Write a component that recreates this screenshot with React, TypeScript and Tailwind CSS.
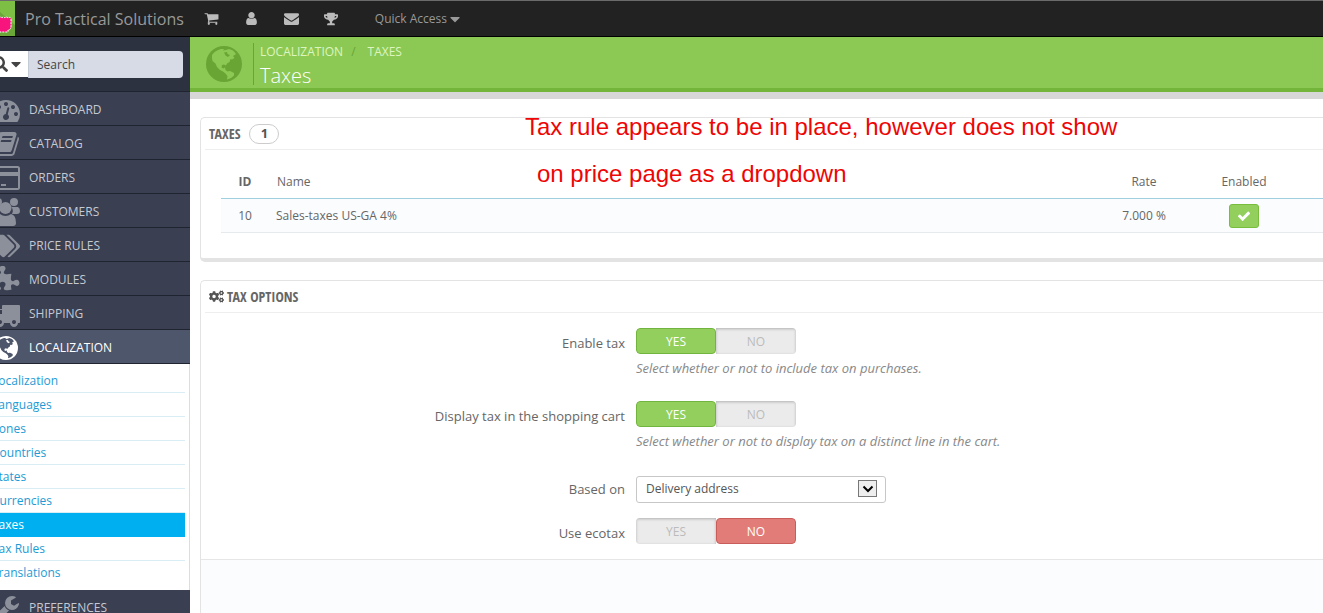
import React, { useState } from 'react';
import { FaCaretDown, FaCogs, FaSearch, FaTags, FaTrophy } from 'react-icons/fa';

interface IconProps {
  className?: string;
}

const PATHS = {
  cart: 'M704 1536q0 52-38 90t-90 38-90-38-38-90 38-90 90-38 90 38 38 90zm896 0q0 52-38 90t-90 38-90-38-38-90 38-90 90-38 90 38 38 90zm128-1088v512q0 24-16.5 42.5t-40.5 21.5l-1044 122q13 60 13 70 0 16-24 64h920q26 0 45 19t19 45-19 45-45 19h-1024q-26 0-45-19t-19-45q0-11 8-31.5t16-36 21.5-40 15.5-29.5l-177-823h-204q-26 0-45-19t-19-45 19-45 45-19h256q16 0 28.5 6.5t19.5 15.5 13 24.5 8 26 5.5 29.5 4.5 26h1201q26 0 45 19t19 45z',
  user: 'M1536 1399q0 109-62.5 187t-150.5 78h-854q-88 0-150.5-78t-62.5-187q0-85 8.5-160.5t31.5-152 58.5-131 94-89 134.5-34.5q131 128 313 128t313-128q76 0 134.5 34.5t94 89 58.5 131 31.5 152 8.5 160.5zm-256-887q0 159-112.5 271.5t-271.5 112.5-271.5-112.5-112.5-271.5 112.5-271.5 271.5-112.5 271.5 112.5 112.5 271.5z',
  envelope: 'M1792 710v794q0 66-47 113t-113 47h-1472q-66 0-113-47t-47-113v-794q44 49 101 87 362 246 497 345 57 42 92.5 65.5t94.5 48 110 24.5h2q51 0 110-24.5t94.5-48 92.5-65.5q170-123 498-345 57-39 100-87zm0-294q0 79-49 151t-122 123q-376 261-468 325-10 7-42.5 31t-54 38.5-52 32.5-57.5 27-50 9h-2q-23 0-50-9t-57.5-27-52-32.5-54-38.5-42.5-31q-91-64-262-182.5t-205-142.5q-62-42-117-115.5t-55-136.5q0-78 41.5-130t118.5-52h1472q65 0 112.5 47t47.5 113z',
  check: 'M1671 566q0 40-28 68l-724 724-136 136q-28 28-68 28t-68-28l-136-136-362-362q-28-28-28-68t28-68l136-136q28-28 68-28t68 28l294 295 656-657q28-28 68-28t68 28l136 136q28 28 28 68z',
  dashboard: 'M384 1152q0-53-37.5-90.5t-90.5-37.5-90.5 37.5-37.5 90.5 37.5 90.5 90.5 37.5 90.5-37.5 37.5-90.5zm192-448q0-53-37.5-90.5t-90.5-37.5-90.5 37.5-37.5 90.5 37.5 90.5 90.5 37.5 90.5-37.5 37.5-90.5zm428 481l101-382q6-26-7.5-48.5t-38.5-29.5-48 6.5-30 39.5l-101 382q-60 5-107 43.5t-63 98.5q-20 77 20 146t117 89 146-20 89-117q16-60-6-117t-72-91zm660-33q0-53-37.5-90.5t-90.5-37.5-90.5 37.5-37.5 90.5 37.5 90.5 90.5 37.5 90.5-37.5 37.5-90.5zm-640-640q0-53-37.5-90.5t-90.5-37.5-90.5 37.5-37.5 90.5 37.5 90.5 90.5 37.5 90.5-37.5 37.5-90.5zm448 192q0-53-37.5-90.5t-90.5-37.5-90.5 37.5-37.5 90.5 37.5 90.5 90.5 37.5 90.5-37.5 37.5-90.5zm320 448q0 261-141 483-19 29-54 29h-1402q-35 0-54-29-141-221-141-483 0-182 71-348t191-286 286-191 348-71 348 71 286 191 191 286 71 348z',
  book: 'M1703 478q40 57 18 129l-275 906q-19 64-76.5 107.5t-122.5 43.5h-923q-77 0-148.5-53.5t-99.5-131.5q-24-67-2-127 0-4 3-27t4-37q1-8-3-21.5t-3-19.5q2-11 8-21t16.5-23.5 16.5-23.5q23-38 45-91.5t30-91.5q3-10 .5-30t-.5-28q3-11 17-28t17-23q21-36 42-92t25-90q1-9-2.5-32t.5-28q4-13 22-30.5t22-22.5q19-26 42.5-84.5t27.5-96.5q1-8-3-25.5t-2-26.5q2-8 9-18t18-23 17-21q8-12 16.5-30.5t15-35 16-36 19.5-32 26.5-23.5 36-11.5 47.5 5.5l-1 3q38-9 51-9h761q74 0 114 56t18 130l-274 906q-36 119-71.5 153.5t-128.5 34.5h-869q-27 0-38 15-11 16-1 43 24 70 144 70h923q29 0 56-15.5t35-41.5l300-987q7-22 5-57 38 15 59 43zm-1064 2q-4 13 2 22.5t20 9.5h608q13 0 25.5-9.5t16.5-22.5l21-64q4-13-2-22.5t-20-9.5h-608q-13 0-25.5 9.5t-16.5 22.5zm-83 256q-4 13 2 22.5t20 9.5h608q13 0 25.5-9.5t16.5-22.5l21-64q4-13-2-22.5t-20-9.5h-608q-13 0-25.5 9.5t-16.5 22.5z',
  puzzle: 'M1755 1083q0 81-44.5 135t-123.5 54q-41 0-77.5-17.5t-59-38-56.5-38-71-17.5q-110 0-110 124 0 39 16 115t15 115v5q-22 0-33 1-34 3-97.5 11.5t-115.5 13.5-98 5q-61 0-103-26.5t-42-83.5q0-37 17.5-71t38-56.5 38-59 17.5-77.5q0-79-54-123.5t-135-44.5q-84 0-143 45.5t-59 127.5q0 43 15 83t33.5 64.5 33.5 53 15 50.5q0 45-46 89-37 35-117 35-95 0-245-24-9-2-27.5-4t-27.5-4l-13-2q-1 0-3-1-2 0-2-1v-1024q2 1 17.5 3.5t34 5 21.5 3.5q150 24 245 24 80 0 117-35 46-44 46-89 0-22-15-50.5t-33.5-53-33.5-64.5-15-83q0-82 59-127.5t144-45.5q80 0 134 44.5t54 123.5q0 41-17.5 77.5t-38 59-38 56.5-17.5 71q0 57 42 83.5t103 26.5q64 0 180-15t163-17v2q-1 2-3.5 17.5t-5 34-3.5 21.5q-24 150-24 245 0 80 35 117 44 46 89 46 22 0 50.5-15t53-33.5 64.5-33.5 83-15q82 0 127.5 59t45.5 143z',
  truck: 'M640 1408q0-52-38-90t-90-38-90 38-38 90 38 90 90 38 90-38 38-90zm-384-512h384v-256h-158q-13 0-22 9l-195 195q-9 9-9 22v30zm1280 512q0-52-38-90t-90-38-90 38-38 90 38 90 90 38 90-38 38-90zm256-1024v1024q0 15-4 26.5t-13.5 18.5-16.5 11.5-23.5 6-22.5 2-25.5 0-22.5-.5q0 106-75 181t-181 75-181-75-75-181h-384q0 106-75 181t-181 75-181-75-75-181h-64q-3 0-22.5.5t-25.5 0-22.5-2-23.5-6-16.5-11.5-13.5-18.5-4-26.5q0-26 19-45t45-19v-320q0-8-.5-35t0-38 2.5-34.5 6.5-37 14-30.5 22.5-30l198-198q19-19 50.5-32t58.5-13h160v-192q0-26 19-45t45-19h1024q26 0 45 19t19 45z',
  wrench: 'M448 1472q0-26-19-45t-45-19-45 19-19 45 19 45 45 19 45-19 19-45zm644-420l-682 682q-37 37-90 37-52 0-91-37l-106-108q-38-36-38-90 0-53 38-91l681-681q39 98 114.5 173.5t173.5 114.5zm634-435q0 39-23 106-47 134-164.5 217.5t-258.5 83.5q-185 0-316.5-131.5t-131.5-316.5 131.5-316.5 316.5-131.5q58 0 121.5 16.5t107.5 46.5q16 11 16 28t-16 28l-293 169v224l193 107q5-3 79-48.5t135.5-81 70.5-35.5q15 0 23.5 10t8.5 25z',
};

const Glyph: React.FC<IconProps & { name: keyof typeof PATHS }> = ({ name, className }) => (
  <svg viewBox="0 0 1792 1792" fill="currentColor" className={className} aria-hidden="true">
    <path d={PATHS[name]} />
  </svg>
);

const GlobeIcon: React.FC<IconProps & { landClass: string }> = ({ className, landClass }) => (
  <svg viewBox="0 0 36 36" className={className} aria-hidden="true">
    <circle cx="18" cy="18" r="18" fill="currentColor" />
    <path
      className={landClass}
      d="M6 9 C8 6 11 4 15 3 L18 3 L17 4.500 L20 4 L23 3 L27 4.500 L30 8 L27 10 L28.500 12 L26 13.500 L24.500 13 L23.500 16 L21 17.500 L20 19.500 L18 18.500 L16 19 L15.500 21.500 L17.500 22.500 L19 21.500 L19.500 24 L21.500 25.500 L24 25 L28 27 L28 29.500 L25 32 L21 33.500 L21.500 30 L19.500 27.500 L17 25.500 L14 24 L11 21 L9.500 17.500 L6.500 15 L6 12 Z"
    />
    <path d="M18 6.500 L21 6 L21.500 8 L24 9 L22 11 L19.500 9.500 Z" fill="currentColor" />
  </svg>
);

const CustomersIcon: React.FC<IconProps> = ({ className }) => (
  <svg viewBox="0 0 28 28" fill="currentColor" className={className} aria-hidden="true">
    <circle cx="6" cy="4" r="4" />
    <circle cx="22" cy="4" r="4" />
    <path d="M2 9h7q-3 3-1 7H3q-3 0-3-3 0-3 2-4z" />
    <path d="M26 9h-5q-1 0-2-.5 3 3.500 1 7.500h5q3 0 3-3 0-3-2-4z" />
    <circle cx="13.500" cy="10" r="6" />
    <path d="M8 16q2.500 2 5.500 2t5.500-2q5 1 5 9 0 3-3 3H6q-3 0-3-3 0-8 5-9z" />
  </svg>
);

const CardIcon: React.FC<IconProps> = ({ className }) => (
  <svg viewBox="0 0 28 28" fill="currentColor" className={className} aria-hidden="true">
    <rect x="1" y="3" width="26" height="22" rx="1.500" fill="none" stroke="currentColor" strokeWidth="2" />
    <path d="M2 8h24v4H2zM4 20h4v2H4zM9 20h5v2H9z" />
  </svg>
);

const iconSize = 'size-7 shrink-0';

const menu = [
  { label: 'DASHBOARD', icon: <Glyph name="dashboard" className={iconSize} /> },
  { label: 'CATALOG', icon: <Glyph name="book" className={iconSize} /> },
  { label: 'ORDERS', icon: <CardIcon className={iconSize} /> },
  { label: 'CUSTOMERS', icon: <CustomersIcon className={iconSize} /> },
  { label: 'PRICE RULES', icon: <FaTags className={iconSize} /> },
  { label: 'MODULES', icon: <Glyph name="puzzle" className={iconSize} /> },
  { label: 'SHIPPING', icon: <Glyph name="truck" className={iconSize} /> },
];

const subMenu = [
  'Localization',
  'Languages',
  'Zones',
  'Countries',
  'States',
  'Currencies',
  'Taxes',
  'Tax Rules',
  'Translations',
];

const TopBar: React.FC = () => (
  <header className="flex h-[37px] items-center border-t border-b border-t-[#6b6b6b] border-b-black bg-[#222] text-[#999]">
    <a href="#shop" aria-label="View shop" className="flex h-full w-[15px] items-center overflow-hidden bg-[#7dbf45]">
      <svg viewBox="0 0 15 35" className="h-full w-full" aria-hidden="true">
        <path d="M0 11L15 24V35H0z" fill="#6aa638" />
        <path
          d="M-1 17q1-2 3 0q1-2 3 0q1-2 3 0q3-2 3 2v6q0 4-3 4v2H0l-2-3z"
          fill="#f7157d"
          stroke="#fff"
          strokeDasharray="2 1"
        />
      </svg>
    </a>
    <a href="#home" className="ml-[10px] text-base">Pro Tactical Solutions</a>
    <nav className="ml-5 flex items-center gap-[25px] text-[#bbb]">
      <a href="#orders" aria-label="Orders"><Glyph name="cart" className="size-[15px]" /></a>
      <a href="#customers" aria-label="Customers"><Glyph name="user" className="size-[15px]" /></a>
      <a href="#messages" aria-label="Messages"><Glyph name="envelope" className="size-[15px]" /></a>
      <a href="#trophy" aria-label="Trophies"><FaTrophy className="size-[14px]" /></a>
    </nav>
    <button type="button" className="ml-[37px] flex items-center text-xs">
      Quick Access
      <FaCaretDown className="size-4" />
    </button>
  </header>
);

const Sidebar: React.FC = () => (
  <aside className="w-[190px] shrink-0 overflow-hidden bg-[#3a3f51] text-xs text-[#c5c9d3]">
    <form className="flex h-[54px] items-center bg-[#2d3240] pr-[7px]">
      <button type="button" aria-label="Search in" className="-ml-2 flex h-[26px] w-9 shrink-0 items-center bg-white text-[#444]">
        <FaSearch className="size-4" />
        <FaCaretDown className="size-4" />
      </button>
      <input
        type="text"
        aria-label="Search"
        placeholder="Search"
        className="h-[27px] w-full min-w-0 rounded-r-sm border-l border-[#c4cad6] bg-[#d6dbe5] px-2 text-xs text-[#444] placeholder:text-[#444]"
      />
    </form>
    <ul>
      {menu.map((item) => (
        <li key={item.label} className="border-t border-[#202430]">
          <a href="#menu" className="-ml-2 flex h-[33px] items-center gap-[9px] pt-[3px]">
            <span className="text-[#8c909b]">{item.icon}</span>
            {item.label}
          </a>
        </li>
      ))}
      <li className="border-t border-b border-[#202430] bg-[#4e566b] text-white">
        <a href="#localization" className="-ml-2 flex h-[33px] items-center gap-[11px] pt-[3px]">
          <GlobeIcon className="ml-[2px] size-6 shrink-0" landClass="fill-[#4e566b]" />
          LOCALIZATION
        </a>
      </li>
    </ul>
    <ul className="border-r border-[#ddd] bg-white py-[5px] pr-1 text-[#1d9bd5]">
      {subMenu.map((label) => (
        <li key={label} className="group">
          <a
            href="#sub"
            className={
              label === 'Taxes'
                ? 'flex h-6 items-center bg-[#00aff0] text-white'
                : 'flex h-6 items-center border-b border-[#d9edf5] group-last:border-white'
            }
          >
            <span className="-ml-2">{label}</span>
          </a>
        </li>
      ))}
    </ul>
    <a href="#preferences" className="-ml-2 flex h-9 items-center gap-[9px]">
      <Glyph name="wrench" className="size-7 shrink-0 text-[#8c909b]" />
      PREFERENCES
    </a>
  </aside>
);

interface SwitchProps {
  name: string;
  label: string;
  initial: 'yes' | 'no';
  hint?: string;
}

const OFF = 'w-1/2 pt-px leading-[25px] bg-[#ebebeb] text-[#bbb] shadow-[inset_0_1px_3px_rgba(0,0,0,0.25)]';
const ON_YES = 'w-1/2 pt-px leading-[23px] rounded-sm border border-[#72b53e] bg-[#92cf5c] text-white';
const ON_NO = 'w-1/2 pt-px leading-[23px] rounded-sm border border-[#c95d59] bg-[#e27c79] text-white';

const SwitchRow: React.FC<SwitchProps> = ({ name, label, initial, hint }) => {
  const [value, setValue] = useState(initial);

  return (
    <div role="radiogroup" aria-labelledby={`${name}_label`} className="flex gap-[11px]">
      <span id={`${name}_label`} className="w-[424px] shrink-0 pt-[5px] text-right text-[13px] leading-5">
        {label}
      </span>
      <div>
        <div className="flex h-[26px] w-[160px] overflow-hidden rounded-sm text-center text-xs">
          <label className={value === 'yes' ? ON_YES : OFF}>
            <input type="radio" name={name} className="sr-only" checked={value === 'yes'} onChange={() => setValue('yes')} />
            YES
          </label>
          <label className={value === 'no' ? ON_NO : OFF}>
            <input type="radio" name={name} className="sr-only" checked={value === 'no'} onChange={() => setValue('no')} />
            NO
          </label>
        </div>
        {hint && <p className="mt-[6px] text-[13px] leading-4 text-[#888] italic">{hint}</p>}
      </div>
    </div>
  );
};

const panelTitle =
  'ml-1 flex h-8 items-center border-b border-[#eee] px-1 font-["Open_Sans_Condensed","Open_Sans",sans-serif] text-sm font-light text-[#666]';

const TaxesPanel: React.FC = () => (
  <section className="h-[145px] rounded-l-[5px] border border-r-0 border-b-4 border-[#e3e3e3] bg-white">
    <h2 className={panelTitle}>
      TAXES
      <span className="ml-[9px] flex h-5 w-[30px] items-center justify-center rounded-full border border-[#ccc] font-['Open_Sans',sans-serif] text-[13px] font-bold text-[#555]">
        1
      </span>
    </h2>
    <div className="pt-[15px] pl-5">
      <table className="w-full table-fixed text-xs">
        <thead>
          <tr className="h-[33px] border-b border-[#a0cfe0]">
            <th className="w-12 pt-[2px] text-center font-bold">ID</th>
            <th className="pt-[2px] pl-2 text-left font-normal">Name</th>
            <th className="w-[100px] pt-[2px] text-center font-normal">Rate</th>
            <th className="w-[100px] pt-[2px] text-center font-normal">Enabled</th>
            <th className="w-[29px]" aria-label="Actions" />
          </tr>
        </thead>
        <tbody>
          <tr className="h-[34px] border-b border-[#e6eaed] bg-[#fafcfe]">
            <td className="pt-[2px] text-center">10</td>
            <td className="pt-[2px] pl-[7px]">Sales-taxes US-GA 4%</td>
            <td className="pt-[2px] text-center">7.000 %</td>
            <td className="pt-[2px]">
              <button
                type="button"
                aria-label="Enabled"
                className="mx-auto flex h-6 w-[30px] items-center justify-center rounded-[3px] border border-[#79bd3c] bg-[#92cf5c] text-white"
              >
                <Glyph name="check" className="size-[14px]" />
              </button>
            </td>
            <td />
          </tr>
        </tbody>
      </table>
    </div>
  </section>
);

const OptionsPanel: React.FC = () => (
  <section className="mt-[18px] flex grow flex-col rounded-tl-[5px] border border-r-0 border-b-0 border-[#e3e3e3] bg-white">
    <h2 className={panelTitle}>
      <FaCogs className="mr-[3px] size-[15px] text-[#555]" />
      TAX OPTIONS
    </h2>
    <form className="flex grow flex-col">
      <div className="py-[15px]">
        <SwitchRow name="enable_tax" label="Enable tax" initial="yes" hint="Select whether or not to include tax on purchases." />
        <div className="mt-[25px]">
          <SwitchRow
            name="display_tax"
            label="Display tax in the shopping cart"
            initial="yes"
            hint="Select whether or not to display tax on a distinct line in the cart."
          />
        </div>
        <div className="mt-[26px] mb-[15px] flex gap-[11px]">
          <label htmlFor="based_on" className="w-[424px] shrink-0 pt-1 text-right text-[13px] leading-5">
            Based on
          </label>
          <div className="relative w-[250px]">
            <select
              id="based_on"
              defaultValue="delivery"
              className="h-[27px] w-full appearance-none rounded-[3px] border border-[#c7c7c7] bg-white pl-[9px] text-xs text-[#555]"
            >
              <option value="delivery">Delivery address</option>
              <option value="invoice">Invoice address</option>
            </select>
            <span className="pointer-events-none absolute top-[5px] right-[9px] flex h-[17px] w-[19px] items-center justify-center border border-[#777] bg-[#eee]">
              <svg viewBox="0 0 12 8" className="h-2 w-3" aria-hidden="true">
                <path d="M1.500 1.500L6 6L10.500 1.500" fill="none" stroke="#000" strokeWidth="2" />
              </svg>
            </span>
          </div>
        </div>
        <SwitchRow name="ecotax" label="Use ecotax" initial="no" />
      </div>
      <div className="min-h-[54px] grow border-t border-[#e6e6e6] bg-[#fbfcfe]" />
    </form>
  </section>
);

const App: React.FC = () => {
  return (
    <div className="flex h-screen flex-col overflow-hidden bg-white font-['Open_Sans',sans-serif] text-[#666]">
      <TopBar />
      <div className="flex grow">
        <Sidebar />
        <main className="relative flex min-w-0 grow flex-col">
          <div className="flex h-[55px] items-center border-b-4 border-[#72b53a] bg-[#8cc954] pl-4">
            <GlobeIcon className="mt-[2px] size-9 text-[#69a534]" landClass="fill-[#8cc954]" />
            <div className="mt-[2px] ml-[11px] h-[42px] border-l border-[#69a534] pl-[6px]">
              <nav className="flex text-xs leading-[18px] text-[#dcf5c0]">
                <a href="#localization">LOCALIZATION</a>
                <span className="ml-2 text-[#69a534]">/</span>
                <a href="#taxes" className="ml-3">TAXES</a>
              </nav>
              <h1 className="text-xl leading-[30px] font-light text-white">Taxes</h1>
            </div>
          </div>
          <div className="h-[7px] bg-[#d7d7d7]" />
          <div className="flex grow flex-col pt-[18px] pl-[10px]">
            <TaxesPanel />
            <OptionsPanel />
          </div>
          {/* Note written over the panel */}
          <p className="pointer-events-none absolute top-[66px] left-[335px] font-['Liberation_Sans',sans-serif] text-2xl leading-[47px] whitespace-nowrap text-[#ee0505]">
            Tax rule appears to be in place, however does not show
            <span className="block pl-3">on price page as a dropdown</span>
          </p>
        </main>
      </div>
    </div>
  );
};

export default App;
